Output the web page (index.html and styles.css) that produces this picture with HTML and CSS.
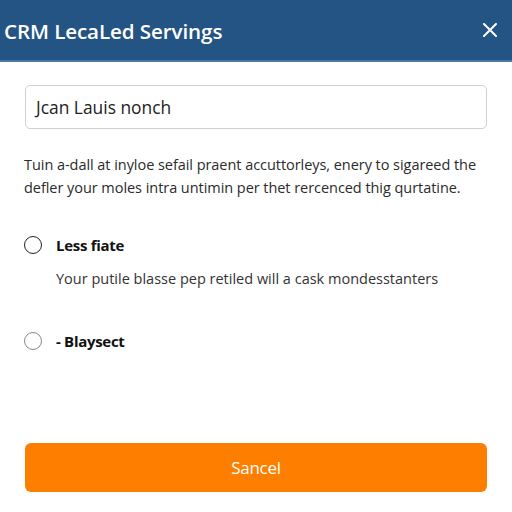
FILE: index.html
```html
<!DOCTYPE html>
<html>
<head>
<meta charset="utf-8">
<link rel="stylesheet" href="styles.css">
</head>
<body>
<div class="dialog">
  <header class="header">
    <h1 class="title">CRM LecaLed Servings</h1>
    <button class="close" aria-label="Close">
      <svg width="14" height="14" viewBox="0 0 14 14"><path d="M1 1 L13 13 M13 1 L1 13" stroke="#fff" stroke-width="2" stroke-linecap="round"/></svg>
    </button>
  </header>
  <main class="body">
    <div class="input">Jcan Lauis nonch</div>
    <p class="intro">Tuin a-dall at inyloe sefail praent accuttorleys, enery to sigareed the<br>defler your moles intra untimin per thet rercenced thig qurtatine.</p>
    <div class="option">
      <span class="radio"></span>
      <span class="label">Less fiate</span>
    </div>
    <p class="desc">Your putile blasse pep retiled will a cask mondesstanters</p>
    <div class="option second">
      <span class="radio light"></span>
      <span class="label">- Blaysect</span>
    </div>
    <div class="spacer"></div>
    <button class="primary">Sancel</button>
  </main>
</div>
</body>
</html>
```
FILE: styles.css
```css
* { box-sizing: border-box; }
html, body { margin: 0; padding: 0; background: #fff; }
body { font-family: "Open Sans", "Noto Sans", sans-serif; width: 512px; height: 512px; overflow: hidden; }
.dialog { display: flex; flex-direction: column; height: 512px; }
.header {
  height: 62px;
  background: #235483;
  border-bottom: 2px solid #4d78a3;
  display: flex;
  align-items: center;
  justify-content: space-between;
  padding: 0 15px 0 4px;
}
.title { margin: 0; color: #fff; font-size: 20.6px; font-weight: 600; letter-spacing: -0.1px; position: relative; top: 1px; }
.close { background: none; border: 0; padding: 0; width: 14px; height: 14px; display: flex; }
.body { flex: 1; display: flex; flex-direction: column; padding: 23px 25px 20px 25px; }
.input {
  height: 44px;
  border: 1px solid #cfcfcf;
  border-radius: 5px;
  padding: 0 10px;
  display: flex;
  align-items: center;
  font-size: 17.4px;
  color: #222;
  letter-spacing: 0;
}
.intro { margin: 24px 0 0 -1px; font-size: 14.5px; line-height: 23px; color: #2b2b2b; letter-spacing: -0.05px; white-space: nowrap; }
.option { display: flex; align-items: center; margin-top: 36px; height: 20px; }
.option.second { margin-top: 43px; }
.radio { width: 18px; height: 18px; border: 1.6px solid #222; border-radius: 50%; margin-left: -1px; }
.radio.light { border-color: #888; }
.label { margin-left: 14px; font-size: 15px; font-weight: 700; color: #111; letter-spacing: -0.3px; }
.desc { margin: 14px 0 0 31px; font-size: 14.5px; color: #333; letter-spacing: 0; }
.spacer { flex: 1; }
.primary {
  height: 49px;
  background: #fe7f00;
  border: 0;
  border-radius: 6px;
  color: #fff;
  font-family: "Open Sans", "Noto Sans", sans-serif;
  font-size: 17px;
  letter-spacing: -0.3px;
}
```
